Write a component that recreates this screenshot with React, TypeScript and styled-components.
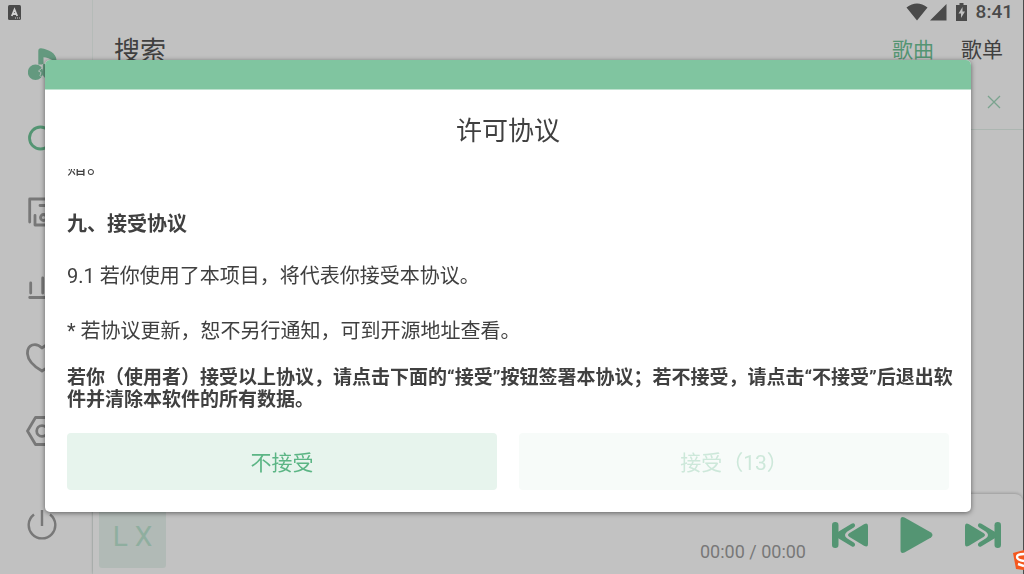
import React from "react";
import styled, { createGlobalStyle } from "styled-components";

const GlobalStyle = createGlobalStyle`
  * { box-sizing: border-box; }
  body { margin: 0; background: #c1c1c1; color: #404040; font-family: Roboto, "Noto Sans CJK SC", sans-serif; }
  button { font: inherit; color: inherit; border: 0; background: none; padding: 0; margin: 0; }
  h1, h2, p { margin: 0; font-weight: 400; }
  svg { display: block; }
`;

const Screen = styled.div`
  display: flex;
  height: 100vh;
  overflow: hidden;
  border-right: 1px solid #4c4c4c;
`;

const StatusBar = styled.div`
  position: absolute;
  top: 0;
  left: 0;
  right: 0;
  height: 24px;
  padding: 0 11px 0 8px;
  display: flex;
  align-items: center;
  justify-content: space-between;
  color: #4a4a4a;
`;

const StatusIcons = styled.div`
  display: flex;
  align-items: center;
  gap: 9px;
  font-size: 19px;
  line-height: 24px;
  font-weight: 500;
`;

const Sidebar = styled.nav`
  flex: none;
  width: 93px;
  padding: 48px 0 33px 24px;
  border-right: 1px solid #b5bbb8;
  display: flex;
  flex-direction: column;
  color: #787878;
`;

const Logo = styled.div`
  height: 54px;
  padding-left: 4px;
`;

const NavButton = styled.button<{ $active?: boolean }>`
  width: 36px;
  height: 73px;
  display: flex;
  align-items: center;
  justify-content: center;
  color: ${(p) => (p.$active ? "#549573" : "#787878")};
`;

const ExitButton = styled(NavButton)`
  margin-top: auto;
  height: 32px;
`;

const Main = styled.main`
  flex: 1;
  min-width: 0;
  display: flex;
  flex-direction: column;
`;

const Header = styled.header`
  display: flex;
  align-items: center;
  padding: 26px 20px 0 21px;
  height: 74px;
`;

const PageTitle = styled.h1`
  flex: 1;
  padding-top: 2px;
  font-size: 26px;
  line-height: 46px;
`;

const Tabs = styled.div`
  display: flex;
  gap: 27px;
`;

const Tab = styled.button<{ $active?: boolean }>`
  font-size: 21px;
  line-height: 44px;
  color: ${(p) => (p.$active ? "#549573" : "#404040")};
`;

const SearchRow = styled.div`
  display: flex;
  align-items: center;
  height: 56px;
  padding: 0 22px;
  border-bottom: 1px solid #acb6b1;
`;

const SearchInput = styled.input`
  flex: 1;
  min-width: 0;
  border: 0;
  background: none;
  font: inherit;
  font-size: 20px;
  outline: none;
`;

const Player = styled.footer`
  display: flex;
  align-items: center;
  height: 80px;
  margin-top: auto;
  padding: 2px 22px 0 6px;
  border-radius: 0 8px 0 0;
  background: #c2c2c2;
  box-shadow: 0 -1px 3px rgba(0, 0, 0, 0.2);
`;

const Cover = styled.div`
  width: 67px;
  height: 66px;
  padding-top: 4px;
  border-radius: 3px;
  background: #b1bab6;
  color: #8fae9f;
  font-size: 28px;
  line-height: 62px;
  text-align: center;
`;

const Time = styled.div`
  flex: 1;
  padding: 34px 26px 0 0;
  font-size: 18px;
  line-height: 24px;
  text-align: right;
  color: #787878;
`;

const Controls = styled.div`
  display: flex;
  align-items: center;
  gap: 32px;
  color: #549573;
`;

const Overlay = styled.div`
  position: fixed;
  inset: 0;
  padding: 60px 53px 62px 45px;
  display: flex;
`;

const Dialog = styled.section`
  flex: 1;
  min-width: 0;
  display: flex;
  flex-direction: column;
  border-radius: 5px;
  overflow: hidden;
  background: #fff;
  box-shadow: 0 1px 5px rgba(0, 0, 0, 0.5);
`;

const DialogBar = styled.div`
  flex: none;
  height: 30px;
  background: #80c5a0;
  border-bottom: 1px solid #bfe2cf;
`;

const DialogTitle = styled.h2`
  flex: none;
  font-size: 26px;
  line-height: 36px;
  padding: 23px 0 20px;
  text-align: center;
`;

const Terms = styled.div`
  flex: 1;
  min-height: 0;
  overflow: hidden;
  display: flex;
  flex-direction: column;
  justify-content: flex-end;
  padding: 0 22px 22px;
  font-size: 20px;
  line-height: 28px;
`;

const Clause = styled.p`
  & + & { margin-top: 27px; }
`;

const ClauseHeading = styled.h3`
  margin: 29px 0 24px;
  font-size: 20px;
  line-height: 28px;
  font-weight: 700;
`;

const Notice = styled.p`
  flex: none;
  padding: 0 16px 0 22px;
  margin-bottom: 22px;
  font-size: 19px;
  line-height: 22px;
  font-weight: 700;
`;

const Actions = styled.div`
  flex: none;
  display: flex;
  gap: 22px;
  padding: 0 22px 22px;
`;

const Action = styled.button`
  flex: 1;
  height: 57px;
  padding-bottom: 2px;
  border-radius: 4px;
  background: #e7f4ed;
  color: #5cb585;
  font-size: 21px;
  &:disabled { background: #f7fbf9; color: #cde8da; }
`;

const InputMethodBadge = styled.div`
  position: fixed;
  right: 0;
  bottom: 4px;
`;

const line = { fill: "none", stroke: "currentColor", strokeWidth: 2.8, strokeLinecap: "round" as const, strokeLinejoin: "round" as const };

const Skip = ({ flip }: { flip?: boolean }) => (
  <svg width="36" height="26" viewBox="0 0 36 26" fill="currentColor">
    <g transform={flip ? "matrix(-1 0 0 1 36 0)" : undefined}>
      <rect x="0" y="0" width="6.500" height="26" rx="3.200" />
      <path d="M5 10.500 19.500 1.700q2.200-1.300 3.300.600t-1 3.200L15 9.700Q11 13 15 16.300L21.800 20.500q2.100 1.300 1 3.200t-3.300.600L5 15.500Z" />
      <path d="M17.500 11 32 2.200Q36 0 36 4V22Q36 26 32 23.800L17.500 15Q14.500 13 17.500 11Z" />
    </g>
  </svg>
);

export default function App() {
  return (
    <>
      <GlobalStyle />
      <Screen>
        <Sidebar>
          <Logo>
            <svg width="29" height="33" viewBox="0 0 29 33" fill="#64997f">
              <circle cx="7.500" cy="24.300" r="7.700" />
              <path d="M10.300 3Q10.300 0 13 .200C21 1.500 28 5 28.500 12L26 13Q20 9.500 15.500 9.300V16H24V27L20 32 16 29 13.500 25 15 24V16.500H10.300Z" />
              <path d="M14.700 16 14 20 10.500 23 13 24.500 12 27.500 15.500 31" fill="none" stroke="#b4c0ba" strokeWidth="1" />
            </svg>
          </Logo>
          <NavButton $active aria-label="搜索">
            <svg width="29" height="28" viewBox="0 0 29 28" {...line}><circle cx="12.500" cy="13" r="11" /><path d="m21 21 6 6" /></svg>
          </NavButton>
          <NavButton aria-label="歌单">
            <svg width="29" height="30" viewBox="0 0 29 30" {...line}><path d="M1.700 25V2H27V10M7 18.500V28H27V14M12 8.500H18.500V20" /><circle cx="15.500" cy="20.500" r="3" /></svg>
          </NavButton>
          <NavButton aria-label="排行榜">
            <svg width="29" height="28" viewBox="0 0 29 28" {...line}><path d="M1.700 26.500H27M2.700 12V22M14.700 7V22M24 2V22" /></svg>
          </NavButton>
          <NavButton aria-label="我的收藏">
            <svg width="32" height="30" viewBox="0 0 32 30" {...line}><path d="M16 5C10-1 1 1 1.500 11 2 18 9 24 16 28 23 24 30 18 30.500 11 31 1 22-1 16 5Z" /></svg>
          </NavButton>
          <NavButton aria-label="设置">
            <svg width="32" height="30" viewBox="0 0 32 30" {...line}><path d="M9.500 1.500H22.500L30.500 15 22.500 28.500H9.500L1.500 15Z" /><circle cx="16" cy="15" r="5.300" /></svg>
          </NavButton>
          <ExitButton aria-label="退出">
            <svg width="30" height="30" viewBox="0 0 30 30" {...line} strokeWidth={2.4} strokeLinecap="butt"><path d="M15 0V16M7 4.500A13.300 13.300 0 1 0 23 4.500" /></svg>
          </ExitButton>
        </Sidebar>
        <Main>
          <Header>
            <PageTitle>搜索</PageTitle>
            <Tabs><Tab $active>歌曲</Tab><Tab>歌单</Tab></Tabs>
          </Header>
          <SearchRow>
            <SearchInput aria-label="搜索歌曲" />
            <button aria-label="清除">
              <svg width="14" height="14" viewBox="0 0 14 14" fill="none" stroke="#7aa38e" strokeWidth="1.300"><path d="M1 1 13 13M13 1 1 13" /></svg>
            </button>
          </SearchRow>
          <Player>
            <Cover>L X</Cover>
            <Time>00:00 / 00:00</Time>
            <Controls>
              <button aria-label="上一首"><Skip /></button>
              <button aria-label="播放">
                <svg width="33" height="36" viewBox="0 0 32 36" fill="currentColor"><path d="M0 3Q0-1 4 .500L30.500 15.500Q33.500 18 30.500 20.500L4 35.500Q0 37 0 33Z" /></svg>
              </button>
              <button aria-label="下一首"><Skip flip /></button>
            </Controls>
          </Player>
        </Main>
        <StatusBar>
          <svg width="13" height="15" viewBox="0 0 13 15"><rect width="13" height="15" rx="1.500" fill="#4a4a4a" /><path d="M3.800 11 6.500 4.500 9.200 11M4.500 9H8.500" fill="none" stroke="#d0d0d0" strokeWidth="1.800" /><path d="M7 13H12" stroke="#d0d0d0" strokeDasharray="1 1" /></svg>
          <StatusIcons>
            <svg width="41" height="18" viewBox="0 0 41 18" fill="currentColor"><path d="M.500 4.500Q11-3.500 21.500 4.500L11 17.500ZM24 17.500 40.500 1V17.500Z" /></svg>
            <svg width="11" height="18" viewBox="0 0 11 18"><path d="M3.500 0H7.500V2H11V18H0V2H3.500Z" fill="currentColor" /><path d="M6.500 4 2.500 10.500H5V15L9 8.500H6.500Z" fill="#c1c1c1" /></svg>
            <span>8:41</span>
          </StatusIcons>
        </StatusBar>
      </Screen>
      <Overlay>
        <Dialog role="dialog" aria-label="许可协议">
          <DialogBar />
          <DialogTitle>许可协议</DialogTitle>
          <Terms>
            <Clause>赠。</Clause>
            <ClauseHeading>九、接受协议</ClauseHeading>
            <Clause>9.1 若你使用了本项目，将代表你接受本协议。</Clause>
            <Clause>* 若协议更新，恕不另行通知，可到开源地址查看。</Clause>
          </Terms>
          <Notice>若你（使用者）接受以上协议，请点击下面的“接受”按钮签署本协议；若不接受，请点击“不接受”后退出软件并清除本软件的所有数据。</Notice>
          <Actions><Action>不接受</Action><Action disabled>接受（13）</Action></Actions>
        </Dialog>
      </Overlay>
      <InputMethodBadge>
        <svg width="11" height="20" viewBox="0 0 11 20"><path d="M0 3 11 0V20L3 19Z" fill="#f4571e" /><path d="M11 4Q4 4 4 7T11 11M11 16 5 14" fill="none" stroke="#fff" strokeWidth="2.400" /></svg>
      </InputMethodBadge>
    </>
  );
}
